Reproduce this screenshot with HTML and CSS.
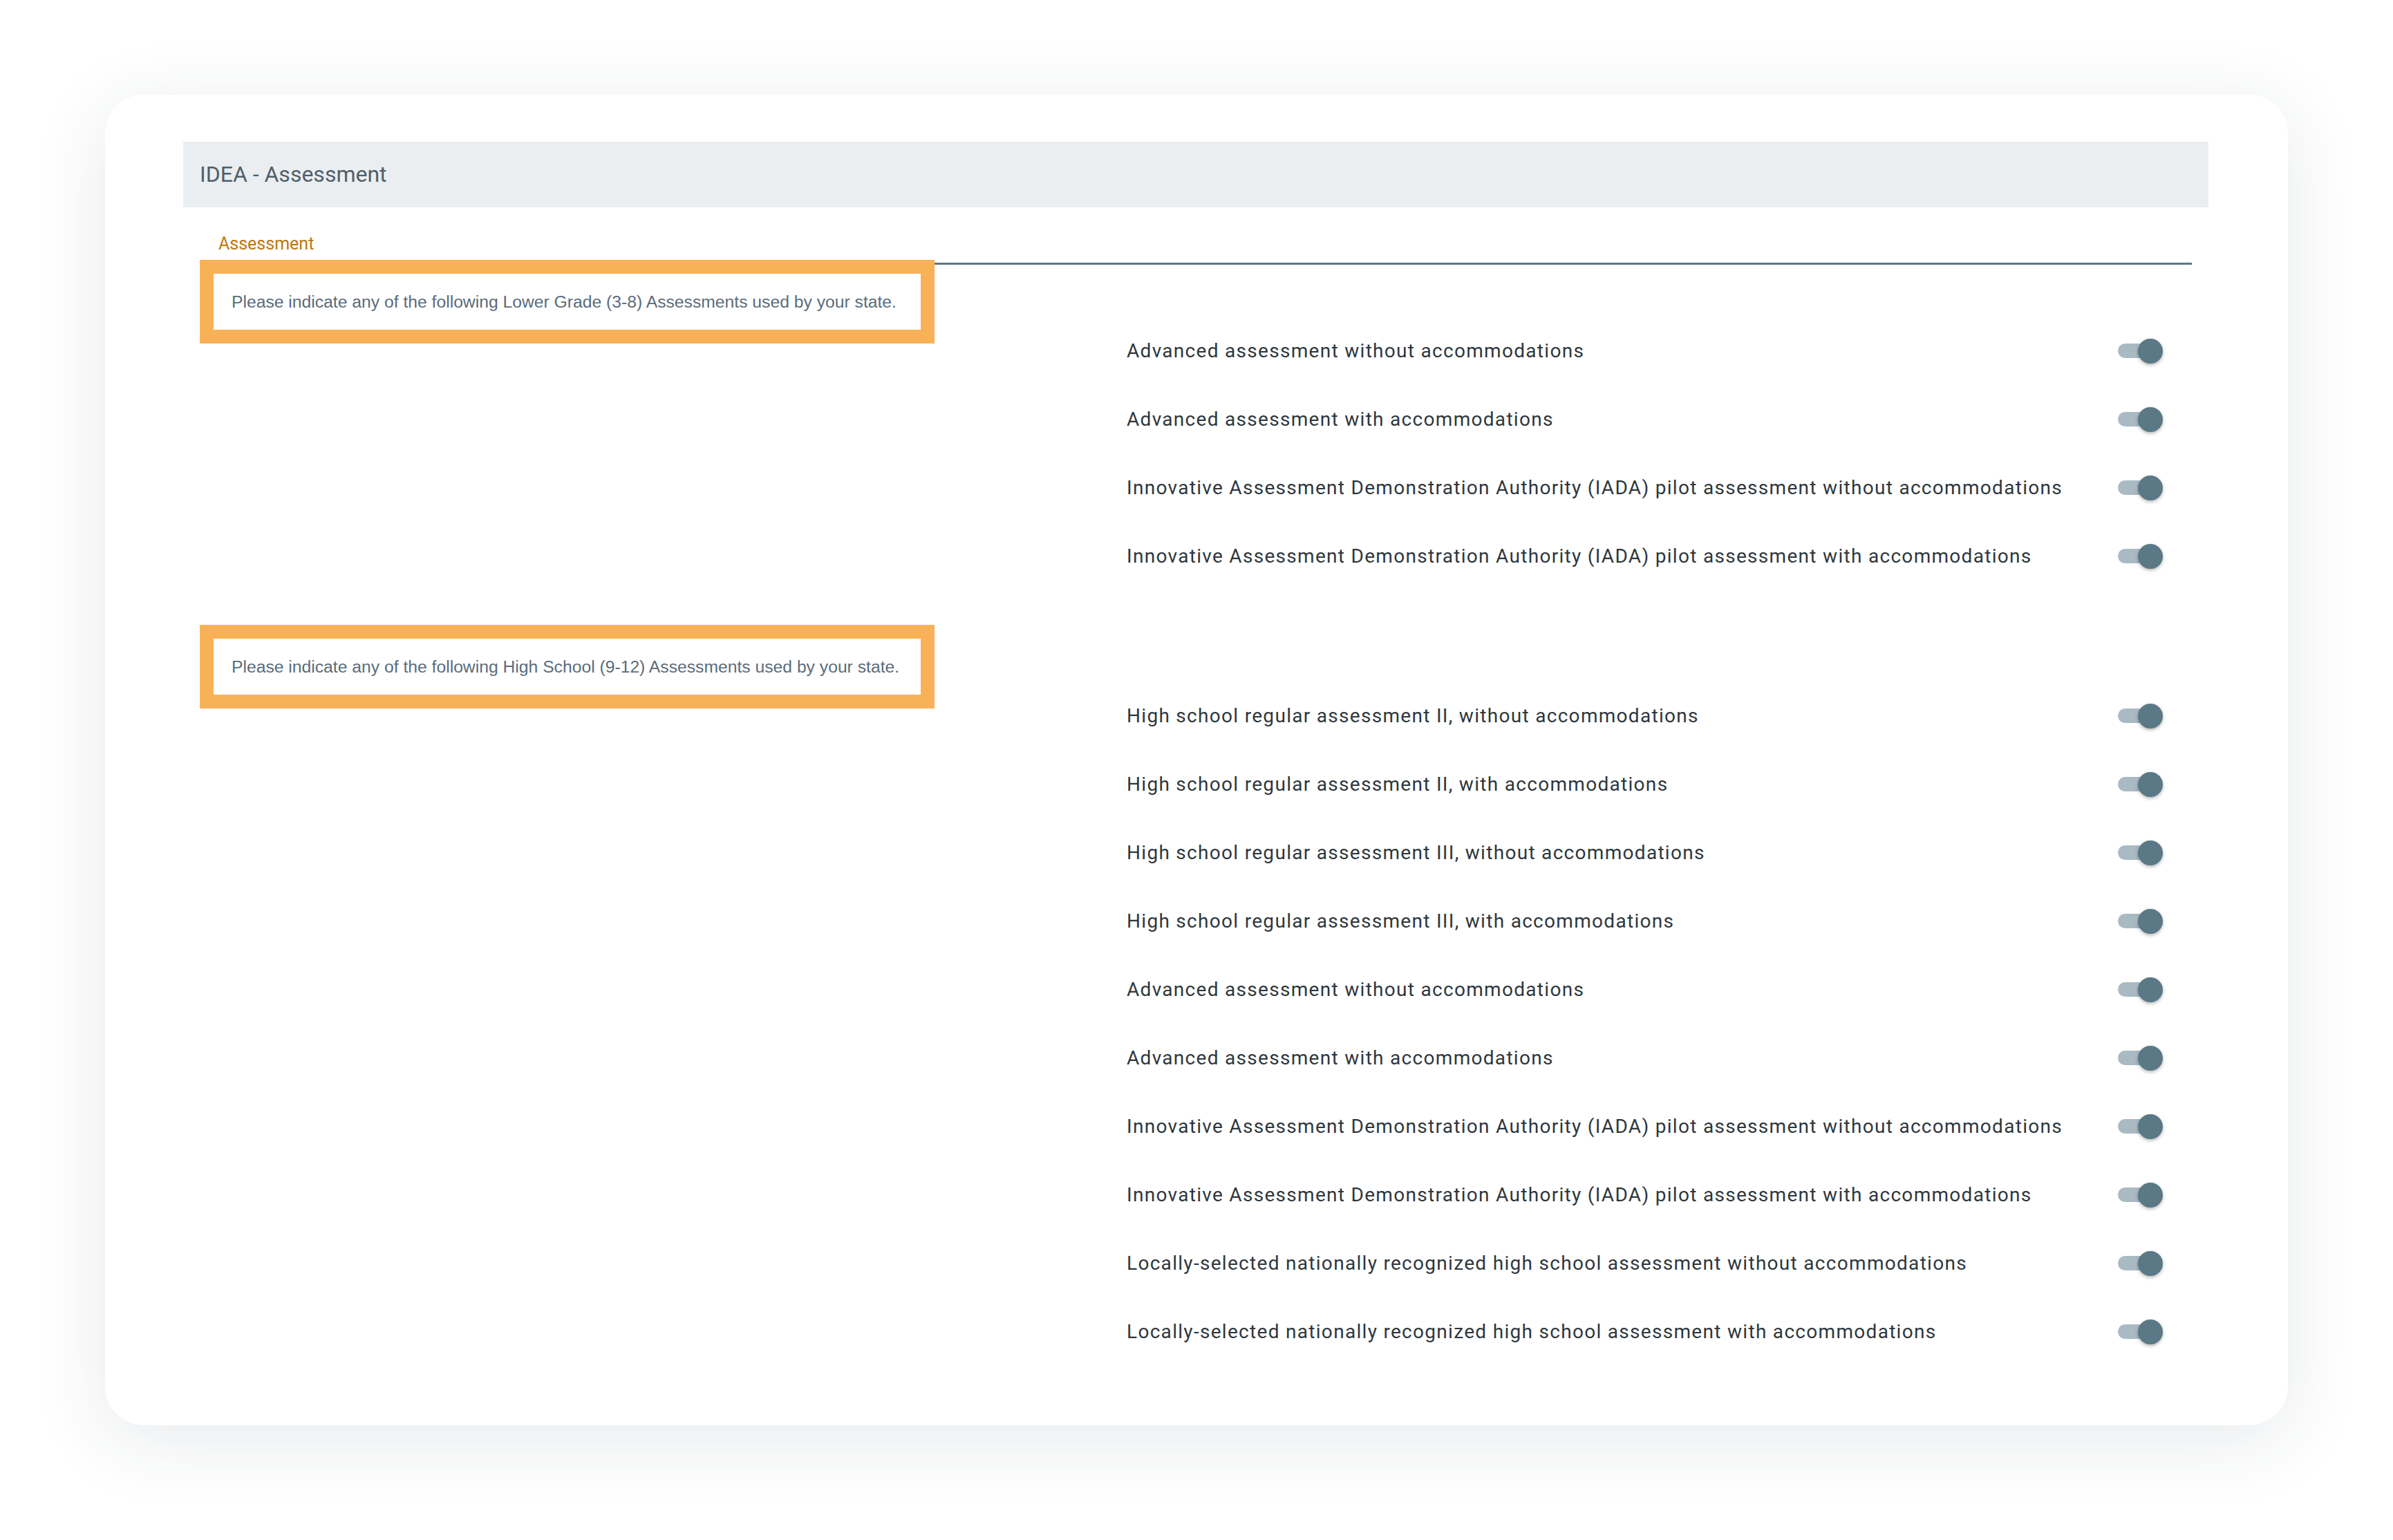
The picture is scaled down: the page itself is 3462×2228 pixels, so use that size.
FILE: index.html
```html
<!DOCTYPE html>
<html lang="en">
<head>
<meta charset="utf-8">
<title>IDEA - Assessment</title>
<link rel="stylesheet" href="styles.css">
</head>
<body>
<div class="page">
  <div class="card">
    <div class="header">IDEA - Assessment</div>
    <div class="form">
      <div class="tabs"><span class="tab">Assessment</span></div>

      <div class="group group-first">
        <div class="note"><div class="note-inner">Please indicate any of the following Lower Grade (3-8) Assessments used by your state.</div></div>
        <div class="list">
          <div class="row"><span class="label">Advanced assessment without accommodations</span><span class="switch"><span class="track"></span><span class="thumb"></span></span></div>
          <div class="row"><span class="label">Advanced assessment with accommodations</span><span class="switch"><span class="track"></span><span class="thumb"></span></span></div>
          <div class="row"><span class="label">Innovative Assessment Demonstration Authority (IADA) pilot assessment without accommodations</span><span class="switch"><span class="track"></span><span class="thumb"></span></span></div>
          <div class="row"><span class="label">Innovative Assessment Demonstration Authority (IADA) pilot assessment with accommodations</span><span class="switch"><span class="track"></span><span class="thumb"></span></span></div>
        </div>
      </div>

      <div class="group">
        <div class="note"><div class="note-inner">Please indicate any of the following High School (9-12) Assessments used by your state.</div></div>
        <div class="list">
          <div class="row"><span class="label">High school regular assessment II, without accommodations</span><span class="switch"><span class="track"></span><span class="thumb"></span></span></div>
          <div class="row"><span class="label">High school regular assessment II, with accommodations</span><span class="switch"><span class="track"></span><span class="thumb"></span></span></div>
          <div class="row"><span class="label">High school regular assessment III, without accommodations</span><span class="switch"><span class="track"></span><span class="thumb"></span></span></div>
          <div class="row"><span class="label">High school regular assessment III, with accommodations</span><span class="switch"><span class="track"></span><span class="thumb"></span></span></div>
          <div class="row"><span class="label">Advanced assessment without accommodations</span><span class="switch"><span class="track"></span><span class="thumb"></span></span></div>
          <div class="row"><span class="label">Advanced assessment with accommodations</span><span class="switch"><span class="track"></span><span class="thumb"></span></span></div>
          <div class="row"><span class="label">Innovative Assessment Demonstration Authority (IADA) pilot assessment without accommodations</span><span class="switch"><span class="track"></span><span class="thumb"></span></span></div>
          <div class="row"><span class="label">Innovative Assessment Demonstration Authority (IADA) pilot assessment with accommodations</span><span class="switch"><span class="track"></span><span class="thumb"></span></span></div>
          <div class="row"><span class="label">Locally-selected nationally recognized high school assessment without accommodations</span><span class="switch"><span class="track"></span><span class="thumb"></span></span></div>
          <div class="row"><span class="label">Locally-selected nationally recognized high school assessment with accommodations</span><span class="switch"><span class="track"></span><span class="thumb"></span></span></div>
        </div>
      </div>
    </div>
  </div>
</div>
</body>
</html>
```
FILE: styles.css
```css
* { box-sizing: border-box; }
html, body { margin: 0; padding: 0; background: #ffffff; }
body { font-family: Roboto, "Noto Sans", sans-serif; }

.page {
  width: 3462px;
  height: 2228px;
  padding: 137px 152px 0 152px;
}

.card {
  width: 3158px;
  height: 1925px;
  background: #ffffff;
  border-radius: 56px;
  box-shadow: 0 20px 110px rgba(40, 52, 75, 0.11);
  padding: 68px 115px 0 113px;
}

.header {
  height: 95px;
  background: #eaeef1;
  color: #4f5f6a;
  font-size: 32px;
  line-height: 95px;
  padding-left: 24px;
}

.form {
  margin: 0 24px;
}

.tabs {
  padding: 38px 0 12px 27px;
  border-bottom: 3px solid #5d7683;
}

.tab {
  display: block;
  font-size: 25px;
  line-height: 30px;
  color: #c0760d;
}

.group {
  display: grid;
  grid-template-columns: 1063px 1fr;
  column-gap: 278px;
  align-items: start;
}

.group-first { margin-top: -7px; }
.group + .group { margin-top: 50px; }

.note {
  height: 121px;
  border: 20px solid #f9b157;
  background: #f9b157;
}

.note-inner {
  height: 100%;
  background: #ffffff;
  display: flex;
  align-items: center;
  padding-left: 26px;
  font-family: "Liberation Sans", Arial, sans-serif;
  font-size: 24.7px;
  color: #5a6c7b;
  white-space: nowrap;
}

.list {
  padding-top: 82px;
  padding-right: 42px;
}

.row {
  height: 99px;
  display: flex;
  align-items: center;
  justify-content: space-between;
}

.label {
  font-size: 28px;
  letter-spacing: 1.3px;
  color: #2e373d;
}

.switch {
  position: relative;
  width: 65px;
  height: 36px;
  flex: none;
}

.track {
  position: absolute;
  left: 0;
  top: 7px;
  width: 57px;
  height: 21px;
  border-radius: 11px;
  background: #a9bac3;
}

.thumb {
  position: absolute;
  right: 0;
  top: 0;
  width: 36px;
  height: 36px;
  border-radius: 50%;
  background: #5a7886;
  box-shadow: 0 2px 5px rgba(0, 0, 0, 0.3);
}
```
